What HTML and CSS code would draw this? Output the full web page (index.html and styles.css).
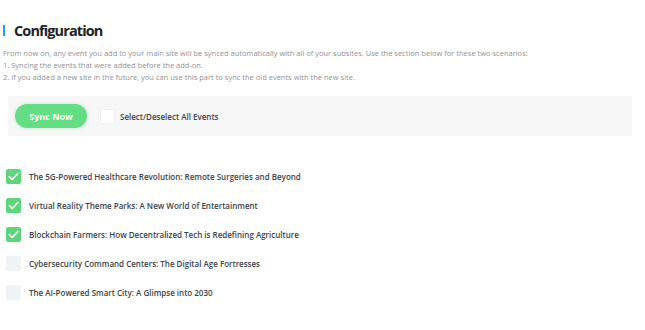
FILE: index.html
```html
<!DOCTYPE html>
<html>
<head>
<meta charset="utf-8">
<link rel="stylesheet" href="styles.css">
</head>
<body>
<div class="page">
  <h1 class="title">Configuration</h1>
  <div class="desc">
    <p>From now on, any event you add to your main site will be synced automatically with all of your subsites. Use the section below for these two scenarios:</p>
    <p>1. Syncing the events that were added before the add-on.</p>
    <p>2. If you added a new site in the future, you can use this part to sync the old events with the new site.</p>
  </div>
  <div class="toolbar">
    <button class="sync">Sync Now</button>
    <label class="all"><span class="box plain"></span><span>Select/Deselect All Events</span></label>
  </div>
  <ul class="events">
    <li><span class="box on"><svg viewBox="0 0 16 16" width="16" height="16"><path d="M3.5 8.2 L6.6 11.2 L12.6 4.8" fill="none" stroke="#fff" stroke-width="1.8" stroke-linecap="round" stroke-linejoin="round"/></svg></span><span>The 5G-Powered Healthcare Revolution: Remote Surgeries and Beyond</span></li>
    <li><span class="box on"><svg viewBox="0 0 16 16" width="16" height="16"><path d="M3.5 8.2 L6.6 11.2 L12.6 4.8" fill="none" stroke="#fff" stroke-width="1.8" stroke-linecap="round" stroke-linejoin="round"/></svg></span><span>Virtual Reality Theme Parks: A New World of Entertainment</span></li>
    <li><span class="box on"><svg viewBox="0 0 16 16" width="16" height="16"><path d="M3.5 8.2 L6.6 11.2 L12.6 4.8" fill="none" stroke="#fff" stroke-width="1.8" stroke-linecap="round" stroke-linejoin="round"/></svg></span><span>Blockchain Farmers: How Decentralized Tech is Redefining Agriculture</span></li>
    <li><span class="box off"></span><span>Cybersecurity Command Centers: The Digital Age Fortresses</span></li>
    <li><span class="box off"></span><span>The AI-Powered Smart City: A Glimpse into 2030</span></li>
  </ul>
</div>
</body>
</html>
```
FILE: styles.css
```css
html, body { margin: 0; padding: 0; background: #fff; }
body { font-family: "Open Sans", "Noto Sans", sans-serif; color: #3c434a; }
.page { padding: 25px 13px 0 3px; }
.title {
  margin: 0;
  padding-left: 9px;
  border-left: 2px solid #1aa3e8;
  font-size: 14.5px;
  letter-spacing: -0.9px;
  line-height: 11px;
  font-weight: 700;
  color: #1d2327;
}
.desc { margin-top: 11px; font-size: 7.5px; color: #8f9296; line-height: 12px; }
.desc p { margin: 0; }
.toolbar {
  margin: 13px 0 0 5px;
  height: 40px;
  background: #f7f7f7;
  display: flex;
  align-items: center;
  padding-left: 7px;
}
.sync {
  width: 72px; height: 24px;
  border: 0; border-radius: 12px;
  background: #64dd84;
  color: #fff;
  font-family: inherit; font-size: 9px; font-weight: 700;
  box-shadow: 0 0 4px rgba(100,221,132,0.35);
  padding: 0;
}
.all { display: flex; align-items: center; margin-left: 13px; font-size: 8px; font-weight: 600; color: #3c434a; }
.box { width: 15px; height: 15px; border-radius: 2px; display: inline-flex; align-items: center; justify-content: center; flex: none; }
.box.plain { background: #fff; border: 1px solid #f0f0f0; box-sizing: border-box; margin-right: 5px; }
.box.on { background: #5cd67a; }
.box.off { background: #f0f3f6; }
.box svg { width: 15px; height: 15px; }
.events { list-style: none; margin: 26px 0 0 3px; padding: 0; }
.events li { display: flex; align-items: center; height: 29px; font-size: 8px; font-weight: 600; color: #3c434a; }
.events li .box { margin-right: 8px; }
```
